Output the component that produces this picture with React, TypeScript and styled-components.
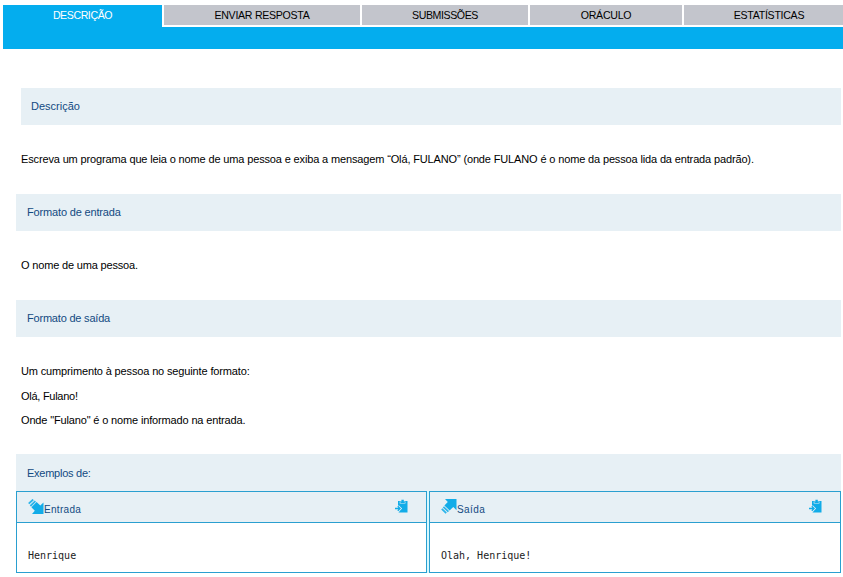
import React from 'react';
import styled, { createGlobalStyle } from 'styled-components';

const GlobalStyle = createGlobalStyle`
  * { box-sizing: border-box; }
  body {
    margin: 0;
    background: #fff;
    overflow: hidden;
    font-family: "Liberation Sans", Arial, sans-serif;
    font-size: 11px;
    line-height: 13px;
    color: #000;
  }
  p { margin: 0; }
`;

const Page = styled.div`
  width: 843px;
  height: 577px;
  overflow: hidden;
  padding: 5px 0 0 3px;
`;

const TabBar = styled.nav`
  display: grid;
  grid-template-columns: 159px 196px 166px 152px 170px;
  column-gap: 2px;
  height: 20px;
`;

const Tab = styled.a<{ $active?: boolean }>`
  height: ${(p) => (p.$active ? 22 : 20)}px;
  background: ${(p) => (p.$active ? '#04adee' : '#c3c5cc')};
  color: ${(p) => (p.$active ? '#fff' : '#000')};
  text-align: center;
  font-size: 10.6px;
  line-height: 20px;
  white-space: nowrap;
`;

const TabStrip = styled.div`
  height: 22px;
  margin-top: 2px;
  background: #04adee;
`;

const Content = styled.main`
  width: 838px;
  padding: 39px 0 0 13px;
`;

const Heading = styled.h2<{ $inset?: boolean; $low?: boolean }>`
  height: 37px;
  margin: 0 0 0 ${(p) => (p.$inset ? 5 : 0)}px;
  padding-left: ${(p) => (p.$inset ? 10 : 11)}px;
  background: #e7f0f5;
  color: #134a82;
  font-size: 11px;
  font-weight: normal;
  line-height: ${(p) => (p.$low ? 39 : 37)}px;
`;

const Body = styled.div<{ $height: number }>`
  height: ${(p) => p.$height}px;
  padding: 28px 0 0 5px;
  display: flex;
  flex-direction: column;
  gap: 11.5px;
  white-space: nowrap;
`;

const Spaced = styled.span<{ $by: number }>`
  letter-spacing: ${(p) => p.$by}px;
`;

const Examples = styled.section`
  display: grid;
  grid-template-columns: 411px 412px;
  column-gap: 2px;
  height: 82px;
  background: #d5f8fe;
`;

const Example = styled.article`
  border: 1px solid #2a9fd0;
  background: #fff;
`;

const ExampleHeader = styled.header`
  display: flex;
  height: 31px;
  padding: 7px 18px 0 11px;
  border-bottom: 1px solid #2a9fd0;
  background: #e7f0f5;
  color: #134a82;
  font-size: 10px;
`;

const Label = styled.span`
  flex: 1;
  padding-top: 4px;
`;

const Sample = styled.pre`
  margin: 0;
  padding: 26px 0 0 11px;
  font-family: "DejaVu Sans Mono", monospace;
  font-size: 10px;
  line-height: 13px;
  color: #222;
`;

const Drawing = styled.svg`
  display: block;
  flex: none;
`;

const InputArrow = () => (
  <Drawing width="16" height="15" viewBox="0 0 16 15" fill="#12ace8">
    <path d="M15.5 3.5V15H4L6.8 11.8L3.4 8.2L8.6 3L12.3 6.6Z" />
    <path d="M2.4 7L7.4 2.2M.7 4.7L5.2 .5" fill="none" stroke="#2db5ea" strokeWidth="1.8" />
  </Drawing>
);

const OutputArrow = () => (
  <Drawing width="16" height="15" viewBox="0 0 16 15" fill="#12ace8">
    <path d="M15.5 0V11.2L12.3 8L8.6 11.4L3.4 6.4L6.8 3L4 0Z" />
    <path d="M2.4 7.8L7.4 12.6M.8 9.9L5.2 14.2" fill="none" stroke="#2db5ea" strokeWidth="1.8" />
  </Drawing>
);

const PasteIcon = () => (
  <Drawing width="13" height="15" viewBox="0 0 13 15">
    <path d="M3 2H12.5V13.5H3.5L6.5 9.5L3 7Z" fill="#12ace8" />
    <path d="M4.7 4.6V2.4H6V.6H9.2V2.4H10.4V4.6Z" fill="#e7f0f5" />
    <path d="M5.4 3.9V2.4H6.4V.8H8.8V2.4H9.8V3.9Z" fill="#12ace8" />
    <path d="M0 9.5H5M2.8 7.2L5.1 9.5L2.8 11.8" fill="none" stroke="#e7f0f5" strokeWidth="2.8" />
    <path d="M0 9.5H5M2.8 7.2L5.1 9.5L2.8 11.8" fill="none" stroke="#12ace8" strokeWidth="1.3" />
  </Drawing>
);

export default function App() {
  return (
    <>
      <GlobalStyle />
      <Page>
        <TabBar>
          <Tab $active><Spaced $by={-0.42}>DESCRIÇÃO</Spaced></Tab>
          <Tab><Spaced $by={-0.28}>ENVIAR RESPOSTA</Spaced></Tab>
          <Tab><Spaced $by={-0.4}>SUBMISSÕES</Spaced></Tab>
          <Tab><Spaced $by={-0.25}>ORÁCULO</Spaced></Tab>
          <Tab><Spaced $by={-0.28}>ESTATÍSTICAS</Spaced></Tab>
        </TabBar>
        <TabStrip />
        <Content>
          <Heading $inset>Descrição</Heading>
          <Body $height={69}>
            <p><Spaced $by={-0.143}>Escreva um programa que leia o nome de uma pessoa e exiba a mensagem “Olá, FULANO” (onde FULANO é o nome da pessoa lida da entrada padrão).</Spaced></p>
          </Body>
          <Heading><Spaced $by={-0.16}>Formato de entrada</Spaced></Heading>
          <Body $height={69}>
            <p><Spaced $by={-0.17}>O nome de uma pessoa.</Spaced></p>
          </Body>
          <Heading><Spaced $by={-0.2}>Formato de saída</Spaced></Heading>
          <Body $height={117}>
            <p><Spaced $by={-0.14}>Um cumprimento à pessoa no seguinte formato:</Spaced></p>
            <p><Spaced $by={-0.27}>Olá, Fulano!</Spaced></p>
            <p><Spaced $by={-0.15}>Onde "Fulano" é o nome informado na entrada.</Spaced></p>
          </Body>
          <Heading $low><Spaced $by={-0.25}>Exemplos de:</Spaced></Heading>
          <Examples>
            <Example>
              <ExampleHeader>
                <InputArrow />
                <Label><Spaced $by={0.3}>Entrada</Spaced></Label>
                <PasteIcon />
              </ExampleHeader>
              <Sample>Henrique</Sample>
            </Example>
            <Example>
              <ExampleHeader>
                <OutputArrow />
                <Label><Spaced $by={0.4}>Saída</Spaced></Label>
                <PasteIcon />
              </ExampleHeader>
              <Sample>Olah, Henrique!</Sample>
            </Example>
          </Examples>
        </Content>
      </Page>
    </>
  );
}
